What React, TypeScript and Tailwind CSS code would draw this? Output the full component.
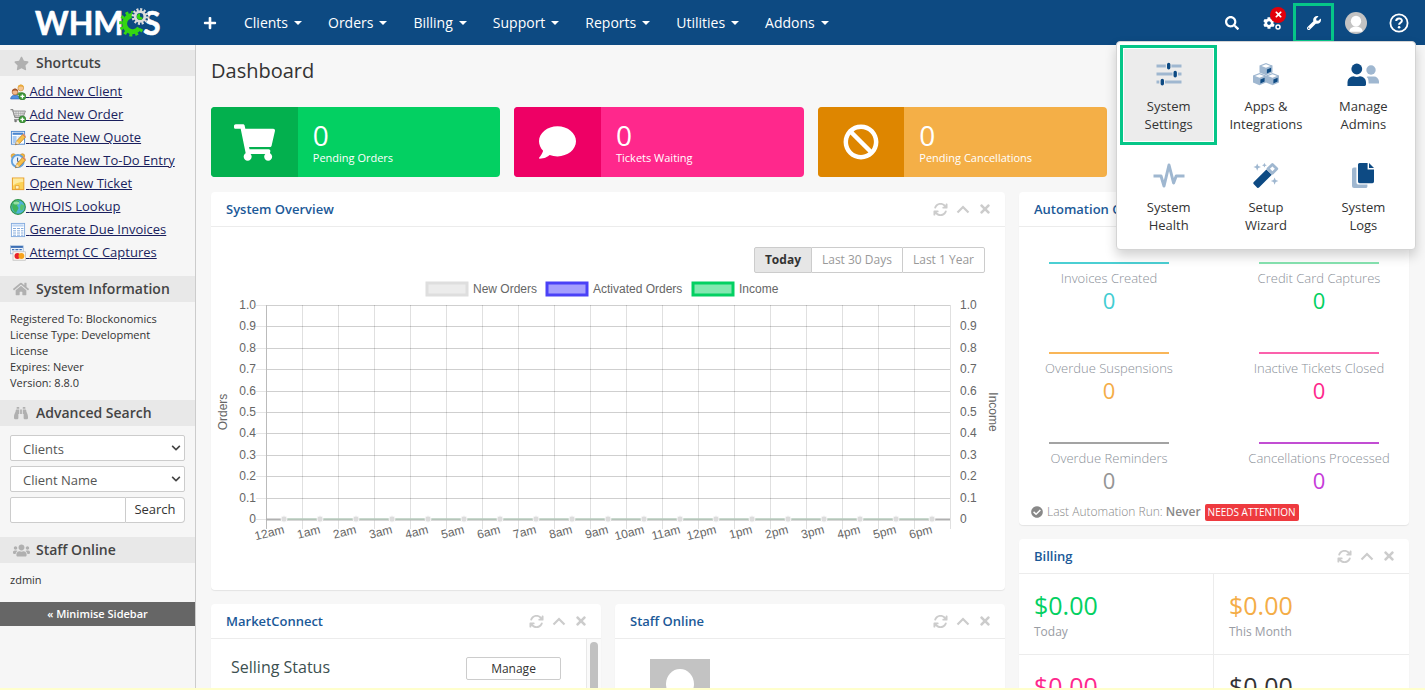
import React from 'react';
import {
  FaBan, FaBinoculars, FaCheckCircle, FaCog, FaComment, FaHome, FaPlus,
  FaSearch, FaShoppingCart, FaStar, FaUsers, FaWrench, FaTimes, FaChevronDown,
} from 'react-icons/fa';
import { FaArrowsRotate } from 'react-icons/fa6';

const NAV = ['Clients', 'Orders', 'Billing', 'Support', 'Reports', 'Utilities', 'Addons'];

const HOURS = [
  '12am', '1am', '2am', '3am', '4am', '5am', '6am', '7am', '8am', '9am',
  '10am', '11am', '12pm', '1pm', '2pm', '3pm', '4pm', '5pm', '6pm',
];

const TICKS = ['1.0', '0.9', '0.8', '0.7', '0.6', '0.5', '0.4', '0.3', '0.2', '0.1', '0'];

const AUTOMATION = [
  { label: 'Invoices Created', bar: 'bg-[#4bcfd3]', text: 'text-[#42cdd2]' },
  { label: 'Credit Card Captures', bar: 'bg-[#86e3b0]', text: 'text-[#03d062]' },
  { label: 'Overdue Suspensions', bar: 'bg-[#f9b658]', text: 'text-[#f4ad47]' },
  { label: 'Inactive Tickets Closed', bar: 'bg-[#fb61ac]', text: 'text-[#fe288c]' },
  { label: 'Overdue Reminders', bar: 'bg-[#a3a3a3]', text: 'text-[#959595]' },
  { label: 'Cancellations Processed', bar: 'bg-[#c24dd3]', text: 'text-[#c63bd9]' },
];

const BILLING = [
  { amount: '$0.00', label: 'Today', text: 'text-[#03d062]' },
  { amount: '$0.00', label: 'This Month', text: 'text-[#f4ad47]' },
  { amount: '$0.00', label: 'This Year', text: 'text-[#fe288c]' },
  { amount: '$0.00', label: 'All Time', text: 'text-[#333333]' },
];

const Logo = () => (
  <a href="#" aria-label="WHMCS" className="flex w-[195px] shrink-0 justify-center">
    <svg width="140" height="44" viewBox="0 0 140 44" className="overflow-visible">
      <g fill="#fff" stroke="#fff" strokeWidth="0.6" className="font-['Lato',sans-serif] text-[32px] font-bold">
        <text x="7" y="34">WHM</text>
        <text x="115" y="34">S</text>
      </g>
      <g fill="none" stroke="#35d611">
        <path d="M111.3 27 A8 8 0 1 1 107 15" strokeWidth="5" />
        <path d="M113.8 28 A11.2 11.2 0 1 1 107.8 12.2" strokeWidth="3.2" strokeDasharray="2.9 2.9" />
      </g>
      <circle cx="112" cy="15.5" r="8.4" fill="#0d4a82" />
      <circle cx="112" cy="15.5" r="7" fill="none" stroke="#dcdcdc" strokeWidth="2.8" strokeDasharray="2 1.66" />
      <circle cx="112" cy="15.5" r="4.8" fill="#0d4a82" stroke="#dcdcdc" strokeWidth="2.8" />
      <path d="M112 15.5 V12.4 A3.2 3.2 0 1 0 115 17 Z" fill="#35d611" />
    </svg>
  </a>
);

const Silhouette = ({ className }: { className: string }) => (
  <svg viewBox="0 0 60 60" className={className} role="img" aria-label="Avatar">
    <rect width="60" height="60" fill="#c3c3c3" />
    <ellipse cx="30" cy="25" rx="14" ry="15" fill="#fff" />
    <path d="M12 54 C12 45 18 42 24 40 L36 40 C42 42 48 45 48 54 Z" fill="#fff" />
  </svg>
);

/* sidebar shortcut icons, 16x16 */
const PlusBadge = () => (
  <g>
    <circle cx="12.4" cy="12.4" r="3.5" fill="#3f9a3a" stroke="#2b7428" strokeWidth="0.6" />
    <path d="M12.4 10.4v4M10.4 12.4h4" stroke="#fff" strokeWidth="1.3" />
  </g>
);

const Pencil = () => (
  <g>
    <path d="M5.5 14.8 L6.6 11 L12.6 4.6 L15.4 7.2 L9.4 13.6 Z" fill="#f8c14a" stroke="#b9771c" strokeWidth="0.7" />
    <path d="M12.6 4.6 L13.6 3.6 L16 6.2 L15.4 7.2 Z" fill="#e58a6f" />
    <path d="M5.5 14.8 L6.6 11 L9.4 13.6 Z" fill="#f3dfb8" />
    <path d="M5.5 14.8 L5.9 13.4 L6.9 14.3 Z" fill="#333" />
  </g>
);

const SHORTCUTS: { label: string; icon: React.ReactNode }[] = [
  {
    label: 'Add New Client',
    icon: (
      <>
        <path d="M6.5 11 C6.5 7.5 14.5 7.5 15 11 Z" fill="#5aa845" stroke="#3c7d2c" strokeWidth="0.5" />
        <circle cx="10.8" cy="4" r="2.9" fill="#f6c58f" stroke="#c98c31" strokeWidth="0.6" />
        <path d="M7.8 3.6 C8 -0.6 14 -0.6 13.8 3.6 C12 2.4 10 2.2 7.8 3.6Z" fill="#e9ab3a" />
        <path d="M0.6 15 C0.6 9.8 9.4 9.8 9.6 15 Z" fill="#4f8fe0" stroke="#2b61b0" strokeWidth="0.6" />
        <circle cx="5" cy="8" r="2.9" fill="#f3b98a" stroke="#a05b2c" strokeWidth="0.6" />
        <path d="M2 7.6 C2.2 3.6 8 3.6 8 7.6 C6.4 6.2 4 6.2 2 7.6Z" fill="#a4562a" />
        <PlusBadge />
      </>
    ),
  },
  {
    label: 'Add New Order',
    icon: (
      <>
        <path d="M0.5 2.6 H2.6 L5 10.5 H13" fill="none" stroke="#8a8a8a" strokeWidth="1.2" />
        <path d="M3 4 H15.4 L13.6 9 H4.5 Z" fill="#e4e4e4" stroke="#8a8a8a" strokeWidth="0.9" />
        <path d="M6 4v5M8.4 4v5M10.8 4v5M13 4v5M3.8 6.4h11" stroke="#9c9c9c" strokeWidth="0.6" />
        <path d="M4 12.6 H12" stroke="#9c9c9c" strokeWidth="1.4" />
        <circle cx="5.6" cy="14" r="1.3" fill="#777" />
        <PlusBadge />
      </>
    ),
  },
  {
    label: 'Create New Quote',
    icon: (
      <>
        <rect x="1.4" y="1.4" width="13.2" height="12.8" fill="#fff" stroke="#4a86cf" strokeWidth="0.9" />
        <rect x="2.6" y="2.6" width="10.8" height="2.2" fill="#4a86cf" />
        <rect x="2.6" y="6" width="4" height="7" fill="#a9cbf2" />
        <path d="M7.6 7h5M7.6 9h4" stroke="#a9cbf2" strokeWidth="0.9" />
        <Pencil />
      </>
    ),
  },
  {
    label: 'Create New To-Do Entry',
    icon: (
      <>
        <circle cx="3.4" cy="3" r="2.3" fill="#f3b73c" stroke="#b9771c" strokeWidth="0.5" />
        <circle cx="12.4" cy="3" r="2.3" fill="#f3b73c" stroke="#b9771c" strokeWidth="0.5" />
        <circle cx="7.8" cy="8" r="6" fill="#e7f2fd" stroke="#64a2dd" strokeWidth="1.9" />
        <path d="M7.6 4.6 V8.4 L10 9.4" fill="none" stroke="#31598c" strokeWidth="1" />
        <Pencil />
      </>
    ),
  },
  {
    label: 'Open New Ticket',
    icon: (
      <>
        <rect x="2.4" y="2" width="11.4" height="11.6" fill="#fbd257" stroke="#e89e2a" strokeWidth="1" />
        <path d="M3 2.6 H13.2 V6 C9 6 4 8 3 10 Z" fill="#fdeaa0" />
        <path d="M5.4 9.6 H9 V13 H5.4 Z" fill="#fff3c4" stroke="#e0952a" strokeWidth="0.7" />
      </>
    ),
  },
  {
    label: 'WHOIS Lookup',
    icon: (
      <>
        <circle cx="8" cy="8" r="7.3" fill="#4fb3d6" stroke="#2f9447" strokeWidth="1.2" />
        <path d="M3 3.4 C6 0.6 9 1.4 9.6 3.4 L7 6.4 L8.6 9 L6 14 C3 12 0.8 8 3 3.4Z" fill="#3fb45a" />
        <path d="M11 5 L14.4 6.6 L13 11 L10.4 11.6 L10 8Z" fill="#57c46d" />
        <ellipse cx="6.4" cy="4" rx="3" ry="1.6" fill="#b9efc4" opacity="0.7" />
      </>
    ),
  },
  {
    label: 'Generate Due Invoices',
    icon: (
      <>
        <rect x="1.4" y="1.4" width="13.2" height="13.2" fill="#fff" stroke="#7fa8dd" strokeWidth="0.9" />
        <rect x="2.4" y="2.4" width="11.2" height="2.2" fill="#bcd5f3" />
        <path d="M3 6.5h3M7 6.5h3M11 6.5h2.4M3 8.8h3M7 8.8h3M11 8.8h2.4M3 11h3M7 11h3M11 11h2.4M3 13.2h3M7 13.2h3M11 13.2h2.4" stroke="#86abdb" strokeWidth="1" />
      </>
    ),
  },
  {
    label: 'Attempt CC Captures',
    icon: (
      <>
        <rect x="0.6" y="0.8" width="12.6" height="8" fill="#eef4fb" stroke="#8eaed6" strokeWidth="0.7" />
        <rect x="0.9" y="1" width="12" height="1.9" fill="#3d6fb4" />
        <path d="M2 4.6h2.4M5.4 4.6h3M9.4 4.6h2.4" fill="none" stroke="#3d6fb4" strokeWidth="1.4" />
        <rect x="3" y="6.8" width="12.6" height="8.4" fill="#fdf6ec" stroke="#b8b8b8" strokeWidth="0.7" />
        <circle cx="7.4" cy="11" r="2.9" fill="#e8222a" />
        <circle cx="11.4" cy="11" r="2.9" fill="#f6a21c" />
      </>
    ),
  },
];

/* two-tone icons of the setup menu, 32x27 */
const DARK = '#0d4a83';
const PALE = '#9fb7d0';

const Cube = ({ x, y }: { x: number; y: number }) => (
  <g transform={`translate(${x} ${y})`}>
    <path d="M0 2.6 L6.5 0 L13 2.6 V9.4 L6.5 12.2 L0 9.4 Z" fill={PALE} />
    <path d="M2 3 L6.5 1.3 L11 3 L6.5 4.8 Z" fill="#fff" />
    <path d="M7.4 6.4 L11.6 4.8 V8.6 L7.4 10.6 Z" fill={DARK} />
  </g>
);

const MENU: { lines: [string, string]; icon: React.ReactNode }[] = [
  {
    lines: ['System', 'Settings'],
    icon: (
      <>
        <path d="M3.5 5h9.3M18.4 5h10.1M3.5 13h16M25 13h3.5M3.5 21h2.8M12 21h16.5" stroke={PALE} strokeWidth="3" />
        <path d="M15.7 3.4v3.4M22.2 11.4v3.4M9.3 19.4v3.4" stroke={DARK} strokeWidth="3.4" strokeLinecap="round" />
      </>
    ),
  },
  {
    lines: ['Apps &', 'Integrations'],
    icon: (
      <>
        <Cube x={9.5} y={2} />
        <Cube x={3} y={12} />
        <Cube x={16} y={12} />
      </>
    ),
  },
  {
    lines: ['Manage', 'Admins'],
    icon: (
      <>
        <circle cx="24" cy="9" r="4.7" fill={PALE} />
        <path d="M20.5 15.6 H26.6 A5 5 0 0 1 32 20.6 V22.4 H21.6 C21.6 19 21.4 17.4 19.6 16Z" fill={PALE} />
        <circle cx="9.8" cy="8" r="5.4" fill={DARK} />
        <path d="M0.5 25 V21 A6 6 0 0 1 6.5 15.2 C8.6 16.2 11 16.2 13 15.2 A6 6 0 0 1 19 21 V23.6 A1.4 1.4 0 0 1 17.6 25 Z" fill={DARK} />
      </>
    ),
  },
  {
    lines: ['System', 'Health'],
    icon: (
      <path d="M0.5 14 H8 L11 24 L16 3 L20.6 21 L23.2 14 H31.5" fill="none" stroke={PALE} strokeWidth="3" strokeLinejoin="round" />
    ),
  },
  {
    lines: ['Setup', 'Wizard'],
    icon: (
      <>
        <path d="M3.6 20.2 L16.4 7.4 L21.8 12.8 L9 25.6 Q8 26.4 7 25.4 L3.6 22 Q2.8 21 3.6 20.2Z" fill={DARK} />
        <path d="M18 6.8 L22.4 2.4 L26.8 6.8 L22.4 11.2 Z" fill="none" stroke={PALE} strokeWidth="2.8" strokeLinejoin="round" />
        <path d="M7.2 1.4 L8.3 4 L11 5 L8.3 6.1 L7.2 8.8 L6.1 6.1 L3.4 5 L6.1 4Z" fill={PALE} />
        <path d="M14.4 0.8 L15.1 2.5 L16.8 3.2 L15.1 3.9 L14.4 5.6 L13.7 3.9 L12 3.2 L13.7 2.5Z" fill={PALE} />
        <path d="M24.6 15.4 L25.7 18 L28.4 19 L25.7 20.1 L24.6 22.8 L23.5 20.1 L20.8 19 L23.5 18Z" fill={PALE} />
      </>
    ),
  },
  {
    lines: ['System', 'Logs'],
    icon: (
      <>
        <path d="M5 7.5 V24 Q5 26 7 26 H18.6 Q20.4 26 20.4 24.4 V22.6 H12 Q9.4 22.6 9.4 20 V5.4 H7 Q5 5.4 5 7.5Z" fill={PALE} />
        <path d="M11 2.6 Q11 1 12.6 1 H20.6 V7.4 H27 V19.6 Q27 21.2 25.4 21.2 H12.6 Q11 21.2 11 19.6Z" fill={DARK} />
        <path d="M22 1 L27 6 H22Z" fill={DARK} />
      </>
    ),
  },
];

const SideHeading = ({ icon, children }: { icon: React.ReactNode; children: React.ReactNode }) => (
  <h2 className="flex h-[26px] items-center bg-[#e8e8e8] text-sm font-semibold text-[#444]">
    <span className="flex w-9 justify-center pl-1.5 text-[#b0b0b0]">{icon}</span>
    {children}
  </h2>
);

const SideSelect = ({ label, value }: { label: string; value: string }) => (
  <div className="relative">
    <select aria-label={label} className="block h-[26px] w-full appearance-none rounded-xs border border-[#ccc] bg-white px-3 pt-1 text-[13px] text-[#555]">
      <option>{value}</option>
    </select>
    <FaChevronDown size={10} className="pointer-events-none absolute top-2 right-1 text-[#444]" />
  </div>
);

const Sidebar = () => (
  <aside className="w-[196px] shrink-0 border-r border-[#ccc] bg-[#f6f6f6] pt-[5px]">
    <SideHeading icon={<FaStar size={15} />}>Shortcuts</SideHeading>
    <ul className="px-2.5 pt-1 pb-3">
      {SHORTCUTS.map((s) => (
        <li key={s.label} className="h-[23px]">
          <a href="#" className="flex items-center text-[13px] leading-[23px] text-[#1a1f5e] underline">
            <svg width="16" height="16" viewBox="0 0 16 16" className="shrink-0">{s.icon}</svg>
            <span className="whitespace-pre"> {s.label}</span>
          </a>
        </li>
      ))}
    </ul>
    <SideHeading icon={<FaHome size={16} />}>System Information</SideHeading>
    <div className="px-2.5 py-[9px] text-[11px] leading-4 text-[#333]">
      <p>Registered To: Blockonomics</p>
      <p>License Type: Development License</p>
      <p>Expires: Never</p>
      <p>Version: 8.8.0</p>
    </div>
    <SideHeading icon={<FaBinoculars size={14} />}>Advanced Search</SideHeading>
    <form className="flex flex-col gap-[5px] px-2.5 pt-[9px] pb-[14px]" onSubmit={(e) => e.preventDefault()}>
      <SideSelect label="Search type" value="Clients" />
      <SideSelect label="Search field" value="Client Name" />
      <div className="flex h-[26px]">
        <input aria-label="Search text" className="min-w-0 flex-1 rounded-l-xs border border-[#ccc] bg-white px-2 text-[13px]" />
        <button type="submit" className="w-[59px] rounded-r-sm border border-l-0 border-[#ccc] bg-white text-[13px] text-[#333]">Search</button>
      </div>
    </form>
    <SideHeading icon={<FaUsers size={17} />}>Staff Online</SideHeading>
    <p className="px-2.5 pt-[7px] pb-3 text-[11px] leading-5 text-[#333]">zdmin</p>
    <button className="block h-6 w-full bg-[#666] text-[11px] font-semibold text-white">« Minimise Sidebar</button>
  </aside>
);

const TopBar = () => (
  <header className="flex h-[45px] shrink-0 items-center bg-[#0d4a82] text-white">
    <Logo />
    <button aria-label="Add" className="ml-[7px] flex w-4 justify-center"><FaPlus size={14} /></button>
    <nav className="ml-[26px] flex gap-[26px]">
      {NAV.map((n) => (
        <a key={n} href="#" className="flex items-center gap-1.5 text-sm">
          {n}
          <svg width="8" height="4" viewBox="0 0 8 4"><path d="M0 0h8L4 4z" fill="#fff" /></svg>
        </a>
      ))}
    </nav>
    <div className="ml-auto flex items-center pr-4">
      <button aria-label="Search" className="mr-6"><FaSearch size={14} /></button>
      <button aria-label="System status" className="relative mr-3 h-4 w-[18px]">
        <FaCog size={12} className="absolute top-0.5 left-0" />
        <svg width="6" height="14" viewBox="0 0 6 14" className="absolute top-px right-0" fill="none" stroke="#fff" strokeWidth="1.5">
          <circle cx="3" cy="3" r="2" />
          <circle cx="3" cy="11" r="2" />
        </svg>
        <span className="absolute -top-2 left-[7px] flex h-4 w-4 items-center justify-center rounded-full bg-[#e2000b]">
          <FaTimes size={9} />
        </span>
      </button>
      <div className="relative z-10">
        <button aria-label="Setup" className="flex h-10 w-[41px] items-center justify-center border-[3px] border-[#06c688]">
          <FaWrench size={14} />
        </button>
        <SetupMenu />
      </div>
      <button aria-label="Account" className="ml-[11px]"><Silhouette className="h-[22px] w-[22px] rounded-full" /></button>
      <button aria-label="Help" className="ml-[22px]">
        <svg width="20" height="20" viewBox="0 0 20 20">
          <circle cx="10" cy="10" r="8.6" fill="none" stroke="#fff" strokeWidth="1.8" />
          <path d="M7.2 8 C7.2 4.6 12.9 4.6 12.9 7.8 C12.9 9.8 10.1 9.8 10.1 11.8" fill="none" stroke="#fff" strokeWidth="2" />
          <circle cx="10.1" cy="14.2" r="1.3" fill="#fff" />
        </svg>
      </button>
    </div>
  </header>
);

const SetupMenu = () => (
  <div className="absolute top-[38px] -right-[82px] grid w-[300px] grid-cols-3 gap-y-px rounded border border-[#d4d4d4] bg-white p-[3px] shadow-[0_6px_12px_rgba(0,0,0,0.18)]">
    {MENU.map((m, i) => (
      <a
        key={m.lines.join(' ')}
        href="#"
        className={`flex h-[100px] flex-col items-center pt-4 text-center text-[13px] leading-[18px] text-[#333] ${
          i === 0 ? 'bg-[#ececec] shadow-[inset_0_0_0_4px_white] outline-[3px] -outline-offset-[3px] outline-[#06c688]' : ''
        }`}
      >
        <svg width="32" height="27" viewBox="0 0 32 27" className="mb-[9px] shrink-0">{m.icon}</svg>
        <span>{m.lines[0]}</span>
        <span>{m.lines[1]}</span>
      </a>
    ))}
  </div>
);

const Badge = ({ icon, label, dark, light }: { icon: React.ReactNode; label: string; dark: string; light: string }) => (
  <a href="#" className={`flex h-[70px] overflow-hidden rounded text-white ${light}`}>
    <span className={`flex w-[30%] items-center justify-center ${dark}`}>{icon}</span>
    <span className="flex flex-col pt-3 pl-[15px]">
      <span className="text-[28px] leading-8">0</span>
      <span className="text-[11px] leading-[14px] font-medium">{label}</span>
    </span>
  </a>
);

const Panel = ({ title, children }: { title: string; children: React.ReactNode }) => (
  <section className="overflow-hidden rounded bg-white shadow-[0_1px_1px_rgba(0,0,0,0.08)]">
    <div className="flex h-[35px] items-center border-b border-[#ececec] px-[15px]">
      <h2 className="pt-px text-[13px] font-semibold text-[#1b5998]">{title}</h2>
      <div className="-mr-0.5 ml-auto flex items-center gap-2 text-[#ccc]">
        <button aria-label={`Refresh ${title}`}><FaArrowsRotate size={15} /></button>
        <button aria-label={`Collapse ${title}`}>
          <svg width="14" height="9" viewBox="0 0 14 9"><path d="M1.5 7.5 L7 2 L12.5 7.5" fill="none" stroke="currentColor" strokeWidth="2.2" /></svg>
        </button>
        <button aria-label={`Close ${title}`}><FaTimes size={14} /></button>
      </div>
    </div>
    {children}
  </section>
);

const OverviewChart = () => {
  const left = 55;
  const top = 25;
  const colW = 36;
  const rowH = 21.4;
  const right = left + colW * HOURS.length;
  const bottom = top + rowH * 10;
  return (
    <svg viewBox="0 0 794 270" className="w-full font-['Liberation_Sans',Arial,sans-serif] text-[12px]" fill="#666" role="img" aria-label="Orders and income today">
      <rect x="216" y="3" width="40" height="12" fill="#ececec" stroke="#dedede" strokeWidth="3" />
      <text x="262" y="13">New Orders</text>
      <rect x="336" y="3" width="40" height="12" fill="#a59ffd" stroke="#4a41f7" strokeWidth="3" />
      <text x="382" y="13">Activated Orders</text>
      <rect x="482" y="3" width="40" height="12" fill="#82e8b0" stroke="#03d062" strokeWidth="3" />
      <text x="528" y="13">Income</text>

      {TICKS.map((t, i) => {
        const y = top + rowH * i;
        return (
          <g key={t}>
            <path d={`M${left} ${Math.round(y) + 0.5}H${right}`} stroke="#cfcfcf" />
            <path d={`M${left - 10} ${Math.round(y) + 0.5}H${left}`} stroke="#e4e4e4" />
            <text x={left - 10} y={y + 4} textAnchor="end">{t}</text>
            <text x={right + 10} y={y + 4}>{t}</text>
          </g>
        );
      })}
      {[...HOURS, 'end'].map((h, i) => (
        <path key={h} d={`M${left + colW * i + 0.5} ${top}V${bottom + 10}`} stroke={i === 0 ? '#bbb' : '#000'} strokeOpacity={i === 0 ? 1 : 0.12} />
      ))}
      <path d={`M${left} ${bottom + 0.5}H${right}`} stroke="#b0b0b0" strokeWidth="2" />
      <path d={`M${left + 18} ${bottom}H${right - 18}`} stroke="#b9d9c2" strokeWidth="1" />
      {HOURS.map((h, i) => {
        const x = left + colW * i + 18;
        return (
          <g key={h}>
            <circle cx={x} cy={bottom} r="3" fill="#dcdcdc" stroke="#f4f4f4" strokeWidth="1" />
            <text x={x + 1} y={bottom + 14} textAnchor="end" transform={`rotate(-14 ${x + 1} ${bottom + 14})`}>{h}</text>
          </g>
        );
      })}
      <text x="16" y="132" textAnchor="middle" transform="rotate(-90 16 132)">Orders</text>
      <text x="778" y="132" textAnchor="middle" transform="rotate(90 778 132)">Income</text>
    </svg>
  );
};

const App: React.FC = () => {
  return (
    <div className="flex h-screen flex-col bg-[#f7f7f7] font-['Open_Sans',sans-serif]">
      <TopBar />
      <div className="flex min-h-0 flex-1 overflow-hidden border-b-2 border-[#ffffcc]">
        <Sidebar />
        <main className="min-w-0 flex-1 px-[15px] pt-3">
          <h1 className="text-xl leading-7 text-[#333]">Dashboard</h1>
          <div className="mt-[22px] grid grid-cols-4 gap-3.5">
            <Badge icon={<FaShoppingCart size={41} />} label="Pending Orders" dark="bg-[#03b04e]" light="bg-[#03d062]" />
            <Badge icon={<FaComment size={37} />} label="Tickets Waiting" dark="bg-[#ee0065]" light="bg-[#ff288c]" />
            <Badge icon={<FaBan size={36} />} label="Pending Cancellations" dark="bg-[#de8600]" light="bg-[#f4af47]" />
            <Badge icon={<FaCog size={36} />} label="Pending Module Actions" dark="bg-[#2f9fa3]" light="bg-[#42cdd2]" />
          </div>

          <div className="mt-[15px] grid grid-cols-3 items-start gap-3.5 pr-px">
            <div className="col-span-2 flex flex-col gap-3.5">
              <Panel title="System Overview">
                <div className="flex justify-end px-5 pt-5 pb-[7px] text-xs text-[#999]">
                  <button className="h-[26px] rounded-l-xs border border-[#ccc] bg-[#e6e6e6] px-2.5 font-bold text-[#333]">Today</button>
                  <button className="h-[26px] border-y border-[#ccc] px-2.5">Last 30 Days</button>
                  <button className="h-[26px] rounded-r-xs border border-[#ccc] px-2.5">Last 1 Year</button>
                </div>
                <div className="pb-10"><OverviewChart /></div>
              </Panel>
              <div className="grid grid-cols-2 gap-3.5">
                <Panel title="MarketConnect">
                  <div className="flex h-[200px]">
                    <div className="flex flex-1 items-start justify-between pt-[18px] pr-[25px] pl-5">
                      <h3 className="text-base leading-5 text-[#3c5050]">Selling Status</h3>
                      <button className="h-[23px] w-[95px] rounded-xs border border-[#ccc] text-xs text-[#333]">Manage</button>
                    </div>
                    <div className="w-[15px] border-l border-[#e8e8e8] bg-[#fafafa] px-[3px] pt-[3px]">
                      <div className="h-40 w-2 rounded-full bg-[#c1c1c1]" />
                    </div>
                  </div>
                </Panel>
                <Panel title="Staff Online">
                  <div className="h-[200px] px-[35px] pt-5"><Silhouette className="h-[60px] w-[60px]" /></div>
                </Panel>
              </div>
            </div>

            <div className="flex flex-col gap-3.5">
              <Panel title="Automation Overview">
                <div className="grid grid-cols-[150px_150px] justify-between gap-y-[38px] px-[15px] pt-[35px]">
                  {AUTOMATION.map((a) => (
                    <div key={a.label} className="flex h-[52px] flex-col items-center">
                      <div className={`h-0.5 w-[120px] shrink-0 ${a.bar}`} />
                      <span className="mt-1 text-[13px] leading-5 font-light whitespace-nowrap text-[#8a8f98]">{a.label}</span>
                      <span className={`text-[22px] leading-6 ${a.text}`}>0</span>
                    </div>
                  ))}
                </div>
                <p className="mt-2 flex items-center px-3 pb-[3px] text-xs leading-5 text-[#888]">
                  <FaCheckCircle size={12} className="mr-1" />
                  <span className="font-light">Last Automation Run:&nbsp;</span>
                  <b className="font-semibold">Never</b>
                  <span className="ml-1 rounded-xs bg-[#ee3a3f] px-[3px] text-[10px] leading-[17px] font-medium text-white">NEEDS ATTENTION</span>
                </p>
              </Panel>
              <Panel title="Billing">
                <div className="grid grid-cols-2">
                  {BILLING.map((b) => (
                    <div key={b.label} className="flex h-[81px] flex-col border-b border-[#ececec] px-[15px] pt-3.5 odd:border-r">
                      <span className={`text-[25px] leading-[34px] ${b.text}`}>{b.amount}</span>
                      <span className="text-xs leading-5 text-[#999ca3]">{b.label}</span>
                    </div>
                  ))}
                </div>
              </Panel>
            </div>
          </div>
        </main>
      </div>
    </div>
  );
};

export default App;
